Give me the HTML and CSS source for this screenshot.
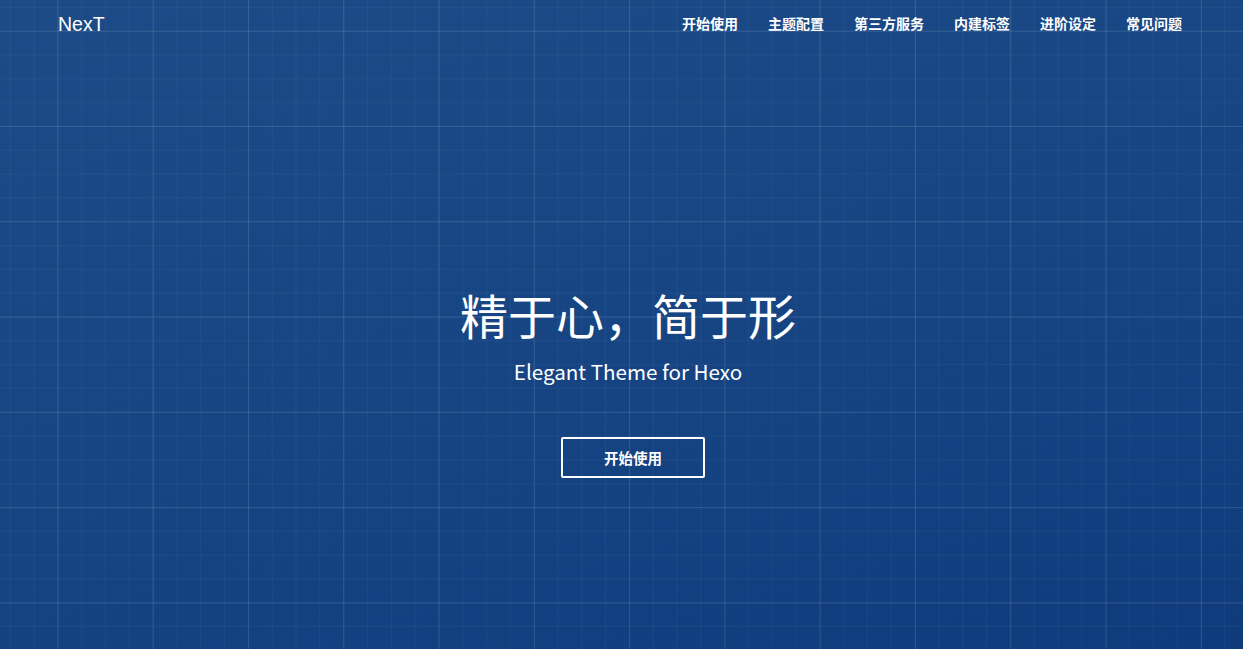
FILE: index.html
```html
<!DOCTYPE html>
<html lang="zh-CN">
<head>
<meta charset="utf-8">
<title>NexT</title>
<link rel="stylesheet" href="styles.css">
</head>
<body>
<div class="page">
  <header class="header">
    <a class="logo" href="#">NexT</a>
    <nav class="nav">
      <a href="#">开始使用</a>
      <a href="#">主题配置</a>
      <a href="#">第三方服务</a>
      <a href="#">内建标签</a>
      <a href="#">进阶设定</a>
      <a href="#">常见问题</a>
    </nav>
  </header>
  <main class="hero">
    <h1 class="title">精于心，简于形</h1>
    <p class="subtitle">Elegant Theme for Hexo</p>
    <a class="btn" href="#">开始使用</a>
  </main>
</div>
</body>
</html>
```

FILE: styles.css
```css
html, body {
  margin: 0;
  padding: 0;
  height: 100%;
}
body {
  font-family: "Noto Sans CJK SC", "Noto Sans", sans-serif;
  color: #fff;
  background-color: #164483;
  background-image:
    linear-gradient(to right, rgba(255,255,255,0.095) 1px, transparent 1px),
    linear-gradient(to bottom, rgba(255,255,255,0.095) 1px, transparent 1px),
    linear-gradient(to right, rgba(255,255,255,0.04) 1px, transparent 1px),
    linear-gradient(to bottom, rgba(255,255,255,0.04) 1px, transparent 1px),
    linear-gradient(165deg, #1c4b88 0%, #174583 50%, #0f3b7d 100%);
  background-size:
    95.3px 95.3px,
    95.3px 95.3px,
    23.825px 23.825px,
    23.825px 23.825px,
    100% 100%;
  background-position:
    57.4px 30.7px,
    57.4px 30.7px,
    9.75px 6.9px,
    9.75px 6.9px,
    0 0;
}
a {
  color: #fff;
  text-decoration: none;
}
.page {
  display: flex;
  flex-direction: column;
  min-height: 100%;
}
.header {
  display: flex;
  justify-content: space-between;
  align-items: center;
  height: 46px;
  padding: 0 61px 0 58px;
}
.logo {
  font-family: "Liberation Sans", Arial, sans-serif;
  font-size: 19.5px;
  line-height: 24px;
  padding-top: 2px;
}
.nav {
  display: flex;
  gap: 30px;
  font-size: 14px;
  font-weight: 700;
  line-height: 20px;
}
.hero {
  display: flex;
  flex-direction: column;
  align-items: center;
  padding: 239px 0 0 13px;
}
.title {
  margin: 0;
  font-size: 48px;
  font-weight: 400;
  line-height: 58px;
}
.subtitle {
  margin: 14px 0 0;
  font-size: 20.6px;
  line-height: 28px;
}
.btn {
  margin-top: 52px;
  margin-left: 10px;
  border: 2px solid #fff;
  padding: 8px 41px;
  font-size: 14.5px;
  font-weight: 700;
  line-height: 21px;
  border-radius: 2px;
}
```
